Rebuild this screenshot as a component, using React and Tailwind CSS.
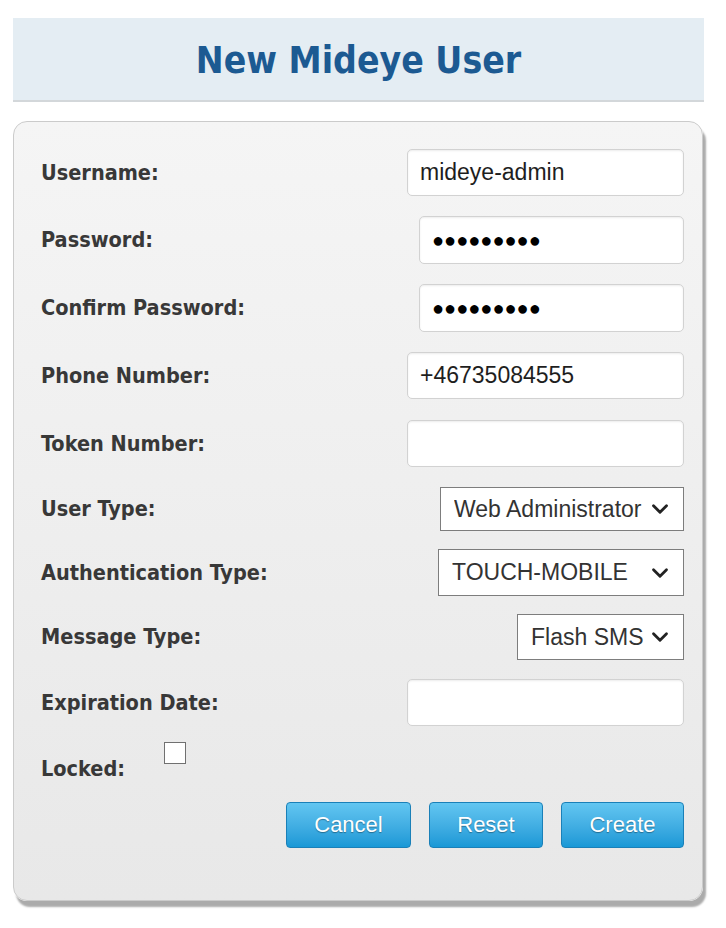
import { ChevronDown } from 'lucide-react';

const labelCls = "font-['DejaVu_Sans_Condensed','DejaVu_Sans',sans-serif] font-stretch-condensed font-bold text-[21.5px] text-[#383838] leading-none";
const inputCls = "h-[47px] rounded-[5px] border border-[#d2d2d2] bg-white pl-[12px] text-[23px] text-[#1e1e1e] shadow-[inset_0_1px_2px_rgba(0,0,0,0.08)] outline-none font-['Liberation_Sans',Arial,sans-serif]";

function TextRow({ label, value, width, mt, dots }) {
    return (
        <div className={`flex items-center justify-between ${mt}`}>
            <span className={labelCls}>{label}</span>
            {dots ? (
                <div className={`${inputCls} ${width} h-[48px] flex items-center`}>
                    <span className="text-[20px] text-black">●●●●●●●●●</span>
                </div>
            ) : (
                <input type="text" defaultValue={value} className={`${inputCls} ${width}`} />
            )}
        </div>
    );
}

function SelectRow({ label, options, width, height, mt }) {
    return (
        <div className={`flex items-center justify-between ${mt}`}>
            <span className={labelCls}>{label}</span>
            <div className={`relative ${width}`}>
                <select
                    defaultValue={options[0]}
                    className={`${height} w-full appearance-none border border-[#7d7d7d] bg-white pl-[13px] text-[23px] text-[#333] outline-none font-['Liberation_Sans',Arial,sans-serif]`}
                >
                    {options.map(o => (
                        <option key={o}>{o}</option>
                    ))}
                </select>
                <ChevronDown className="pointer-events-none absolute right-[11px] top-1/2 -translate-y-1/2 h-[26px] w-[26px] text-[#222]" strokeWidth={2.6} />
            </div>
        </div>
    );
}

export default function App() {
    return (
        <div className="w-[726px] h-[928px] bg-white px-[13px] pt-[18px]">
            <div className="w-[691px] h-[84px] bg-[#e4edf3] border-b-2 border-[#d3d7da] flex items-center justify-center">
                <h1 className="font-['DejaVu_Sans_Condensed','DejaVu_Sans',sans-serif] font-stretch-condensed font-bold text-[37px] text-[#1c5a92] leading-none pt-[2px]">
                    New Mideye User
                </h1>
            </div>

            <div className="mt-[19px] w-[690px] h-[780px] rounded-[14px] border border-[#cbcbcb] bg-gradient-to-b from-[#f5f5f5] to-[#e8e8e8] shadow-[3px_6px_2px_#ababab] pl-[27px] pr-[18px] pt-[27px]">
                <TextRow label="Username:" value="mideye-admin" width="w-[277px]" mt="" />
                <TextRow label="Password:" width="w-[265px]" mt="mt-[20px]" dots />
                <TextRow label="Confirm Password:" width="w-[265px]" mt="mt-[20px]" dots />
                <TextRow label="Phone Number:" value="+46735084555" width="w-[277px]" mt="mt-[20px]" />
                <TextRow label="Token Number:" value="" width="w-[277px]" mt="mt-[21px]" />
                <SelectRow label="User Type:" options={['Web Administrator', 'User', 'Administrator']} width="w-[244px]" height="h-[44px]" mt="mt-[20px]" />
                <SelectRow label="Authentication Type:" options={['TOUCH-MOBILE', 'SMS', 'TOKEN']} width="w-[246px]" height="h-[47px]" mt="mt-[18px]" />
                <SelectRow label="Message Type:" options={['Flash SMS', 'SMS']} width="w-[167px]" height="h-[46px]" mt="mt-[18px]" />
                <TextRow label="Expiration Date:" value="" width="w-[277px]" mt="mt-[19px]" />

                <div className="mt-[15px] flex items-start">
                    <span className={`${labelCls} mt-[17px]`}>Locked:</span>
                    <input type="checkbox" className="ml-[39px] mt-[1px] h-[22px] w-[22px] appearance-none border border-[#707070] bg-white" />
                </div>

                <div className="mt-[22px] flex justify-end gap-[18px] font-['Liberation_Sans',Arial,sans-serif]">
                    <button className="h-[46px] w-[125px] rounded-[4px] border border-[#1a80b8] bg-gradient-to-b from-[#62c6f1] to-[#1898d6] text-[22px] text-white [text-shadow:0_1px_1px_rgba(0,0,0,0.35)]">
                        Cancel
                    </button>
                    <button className="h-[46px] w-[114px] rounded-[4px] border border-[#1a80b8] bg-gradient-to-b from-[#62c6f1] to-[#1898d6] text-[22px] text-white [text-shadow:0_1px_1px_rgba(0,0,0,0.35)]">
                        Reset
                    </button>
                    <button className="h-[46px] w-[123px] rounded-[4px] border border-[#1a80b8] bg-gradient-to-b from-[#62c6f1] to-[#1898d6] text-[22px] text-white [text-shadow:0_1px_1px_rgba(0,0,0,0.35)]">
                        Create
                    </button>
                </div>
            </div>
        </div>
    );
}
